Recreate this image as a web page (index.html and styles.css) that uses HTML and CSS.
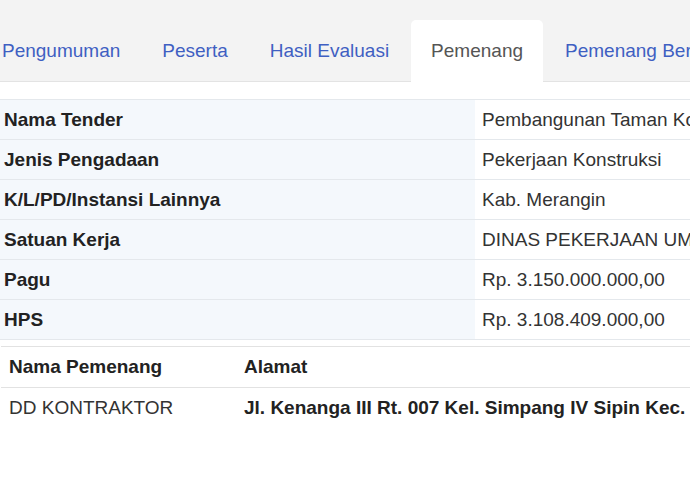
FILE: index.html
```html
<!DOCTYPE html>
<html lang="id">
<head>
    <meta charset="UTF-8">
    <meta name="viewport" content="width=device-width, initial-scale=1.0">
    <title>Pemenang Tender</title>
    <link rel="stylesheet" href="styles.css">
</head>
<body>
    <div class="tab-bar">
        <ul class="tabs">
            <li><a href="#">Pengumuman</a></li>
            <li><a href="#">Peserta</a></li>
            <li><a href="#">Hasil Evaluasi</a></li>
            <li class="active"><a href="#">Pemenang</a></li>
            <li><a href="#">Pemenang Berkontrak</a></li>
        </ul>
    </div>

    <div class="content">
        <table class="info-table">
            <tr>
                <th>Nama Tender</th>
                <td>Pembangunan Taman Kota Bangko Tahap II</td>
            </tr>
            <tr>
                <th>Jenis Pengadaan</th>
                <td>Pekerjaan Konstruksi</td>
            </tr>
            <tr>
                <th>K/L/PD/Instansi Lainnya</th>
                <td>Kab. Merangin</td>
            </tr>
            <tr>
                <th>Satuan Kerja</th>
                <td>DINAS PEKERJAAN UMUM DAN PENATAAN RUANG</td>
            </tr>
            <tr>
                <th>Pagu</th>
                <td>Rp. 3.150.000.000,00</td>
            </tr>
            <tr>
                <th>HPS</th>
                <td>Rp. 3.108.409.000,00</td>
            </tr>
        </table>

        <table class="winner-table">
            <tr>
                <th class="col-name">Nama Pemenang</th>
                <th>Alamat</th>
            </tr>
            <tr>
                <td class="col-name">DD KONTRAKTOR</td>
                <td class="address">Jl. Kenanga III Rt. 007 Kel. Simpang IV Sipin Kec. Telanaipura Kota Jambi</td>
            </tr>
        </table>
    </div>
</body>
</html>
```

FILE: styles.css
```css
body {
    margin: 0;
    font-family: "Liberation Sans", Arial, sans-serif;
    font-size: 19px;
    color: #333;
    background-color: white;
    overflow: hidden;
}
.tab-bar {
    background-color: #f3f3f3;
    border-bottom: 1px solid #e3e3e3;
    padding-top: 20px;
    height: 61px;
}
.tabs {
    list-style: none;
    display: flex;
    margin: 0 0 0 -18px;
    padding: 0;
    white-space: nowrap;
}
.tabs li {
    margin-right: 2px;
}
.tabs a {
    display: block;
    height: 62px;
    line-height: 62px;
    padding: 0 20px;
    color: #3f5fc2;
    text-decoration: none;
    border-radius: 5px 5px 0 0;
}
.tabs .active a {
    background-color: white;
    color: #555;
}
.content {
    padding-top: 17px;
}
table {
    border-collapse: collapse;
    table-layout: fixed;
    white-space: nowrap;
}
.info-table {
    width: 1100px;
}
.info-table th,
.info-table td {
    height: 39px;
    padding: 0;
    border-top: 1px solid #e4e8ec;
    text-align: left;
    overflow: hidden;
}
.info-table tr:last-child th,
.info-table tr:last-child td {
    border-bottom: 1px solid #e4e8ec;
}
.info-table th {
    width: 471px;
    padding-left: 4px;
    background-color: #f4f8fc;
    color: #222;
}
.info-table td {
    padding-left: 7px;
    color: #333;
}
.winner-table {
    width: 1100px;
    margin-top: 6px;
    margin-left: 1px;
}
.winner-table th,
.winner-table td {
    height: 40px;
    padding: 0 8px;
    text-align: left;
    border-top: 1px solid #e2e2e2;
    overflow: hidden;
}
.winner-table th {
    color: #222;
}
.winner-table .col-name {
    width: 219px;
}
.winner-table td {
    color: #333;
}
.winner-table .address {
    font-weight: bold;
    color: #222;
}
```
